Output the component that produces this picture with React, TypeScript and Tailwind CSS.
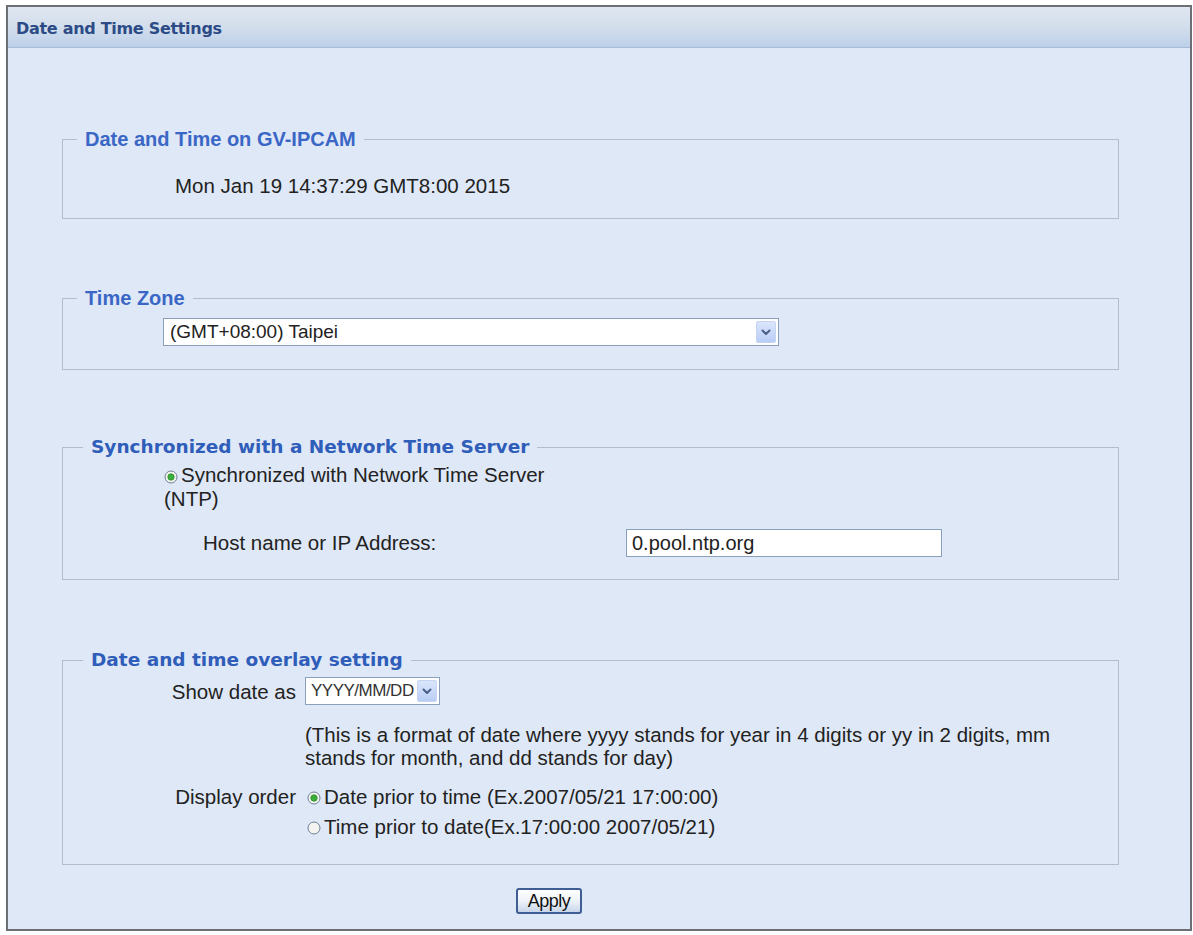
import React from "react";

function Radio({ checked }: { checked?: boolean }) {
  return (
    <svg width="14" height="14" viewBox="0 0 14 14" className="inline-block shrink-0">
      <circle cx="7" cy="7" r="6" fill="#f4f4f0" stroke="#6e8196" strokeWidth="1" />
      {checked && <circle cx="7" cy="7" r="3.2" fill="#3aae3a" stroke="#2a8f2a" strokeWidth="0.8" />}
    </svg>
  );
}

function DropBtn() {
  return (
    <span className="flex h-[22px] w-[20px] items-center justify-center rounded-[2px] border border-[#c5d4f2] bg-gradient-to-b from-[#dbe6fc] to-[#b9cdf5]">
      <svg width="10" height="7" viewBox="0 0 10 7">
        <path d="M1.5 1.5 L5 5 L8.5 1.5" fill="none" stroke="#4a5f87" strokeWidth="2" strokeLinecap="round" strokeLinejoin="round" />
      </svg>
    </span>
  );
}

export default function App() {
  return (
    <div className="min-h-[935px] bg-white pl-[6px] pt-[5px] font-['Liberation_Sans',Arial,sans-serif] text-[#222]">
      <div className="flex h-[926px] w-[1186px] flex-col border-2 border-[#6c7075] bg-[#dfe8f6]">
        {/* header */}
        <div className="h-[41px] shrink-0 border-b border-[#a9bbd4] bg-gradient-to-b from-[#dfe6f0] via-[#d3deec] to-[#bdd0ea] pl-[8px] pt-[10px]">
          <span className="font-['DejaVu_Sans',Verdana,sans-serif] text-[16px] font-bold leading-[20px] tracking-[-0.3px] text-[#2c4b86]">
            Date and Time Settings
          </span>
        </div>

        <div className="flex flex-col pl-[54px] pr-[71px]">
          {/* FS1 */}
          <fieldset className="mt-[79px] border border-[#b2bccb] pb-[21px] pt-[24px]">
            <legend className="ml-[14px] px-[8px] text-[20px] font-bold leading-[24px] text-[#3a67c6]">
              Date and Time on GV-IPCAM
            </legend>
            <div className="ml-[112px] text-[20.5px] leading-[22px]">Mon Jan 19 14:37:29 GMT8:00 2015</div>
          </fieldset>

          {/* FS2 */}
          <fieldset className="mt-[67px] border border-[#b2bccb] pb-[23px] pt-[8px]">
            <legend className="ml-[14px] px-[8px] text-[20px] font-bold leading-[24px] text-[#3a67c6]">
              Time Zone
            </legend>
            <div className="ml-[100px] flex h-[28px] w-[616px] items-center justify-between border border-[#8a9fbc] bg-white pl-[6px] pr-[2px]">
              <span className="text-[19px] leading-[22px]">(GMT+08:00) Taipei</span>
              <DropBtn />
            </div>
          </fieldset>

          {/* FS3 */}
          <fieldset className="mt-[65px] border border-[#b2bccb] pb-[22px] pt-[4px]">
            <legend className="ml-[20px] px-[8px] font-['DejaVu_Sans',Verdana,sans-serif] text-[18.5px] font-bold leading-[24px] text-[#2f5dba]">
              Synchronized with a Network Time Server
            </legend>
            <div className="ml-[101px] w-[400px] text-[20.5px] leading-[24px]">
              <Radio checked />
              <span className="ml-[3px]">Synchronized with Network Time Server (NTP)</span>
            </div>
            <div className="mt-[18px] flex items-center">
              <span className="ml-[140px] w-[423px] text-[20.5px] leading-[22px]">Host name or IP Address:</span>
              <div className="flex h-[28px] w-[316px] items-center border border-[#8a9fbc] bg-white pl-[5px] text-[20px] leading-[22px]">
                0.pool.ntp.org
              </div>
            </div>
          </fieldset>

          {/* FS4 */}
          <fieldset className="mt-[68px] border border-[#b2bccb] pb-[26px] pt-[5px]">
            <legend className="ml-[20px] px-[8px] font-['DejaVu_Sans',Verdana,sans-serif] text-[18.5px] font-bold leading-[24px] text-[#2f5dba]">
              Date and time overlay setting
            </legend>
            <div className="grid grid-cols-[233px_1fr] gap-x-[9px] text-[20.5px] leading-[23px]">
              <div className="flex h-[28px] items-center justify-end">Show date as</div>
              <div>
                <div className="flex h-[28px] w-[135px] items-center justify-between border border-[#8a9fbc] bg-white pl-[5px] pr-[2px]">
                  <span className="text-[17px] leading-[20px] tracking-[-0.5px] text-[#333]">YYYY/MM/DD</span>
                  <DropBtn />
                </div>
              </div>

              <div />
              <div className="mt-[18px] w-[760px]">
                (This is a format of date where yyyy stands for year in 4 digits or yy in 2 digits, mm stands for month, and dd stands for day)
              </div>

              <div className="mt-[15px] flex h-[24px] items-center justify-end">Display order</div>
              <div className="mt-[15px] flex h-[24px] items-center">
                <span className="ml-[2px]"><Radio checked /></span>
                <span className="ml-[3px]">Date prior to time (Ex.2007/05/21 17:00:00)</span>
              </div>

              <div />
              <div className="mt-[6px] flex h-[24px] items-center">
                <span className="ml-[2px]"><Radio /></span>
                <span className="ml-[3px]">Time prior to date(Ex.17:00:00 2007/05/21)</span>
              </div>
            </div>
          </fieldset>
        </div>

        <div className="mt-[23px] pl-[508px]">
          <button className="flex h-[26px] w-[66px] items-center justify-center rounded-[3px] border-2 border-[#3f5e93] bg-gradient-to-b from-white via-[#eef2f8] to-[#c9d6ea] text-[18px] leading-[20px] tracking-[-0.5px] text-[#111]">
            Apply
          </button>
        </div>
      </div>
    </div>
  );
}
